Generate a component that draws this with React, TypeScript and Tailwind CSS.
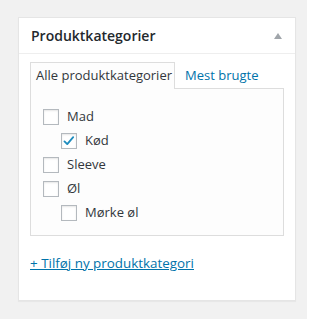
import React from "react";

function Box({ checked }: { checked?: boolean }) {
  return (
    <span className="w-4 h-4 border border-[#b4b9be] bg-white flex items-center justify-center shrink-0 shadow-[inset_0_1px_2px_rgba(0,0,0,0.1)]">
      {checked && (
        <svg width="14" height="14" viewBox="0 0 20 20">
          <path d="M3.5 10.5 L7.5 14.5 L16 4.5" fill="none" stroke="#1e8cbe" strokeWidth="2.6" strokeLinecap="round" strokeLinejoin="round" />
        </svg>
      )}
    </span>
  );
}

function Row({ label, indent, checked }: { label: string; indent?: boolean; checked?: boolean }) {
  return (
    <div className={indent ? "flex items-center h-6 pl-[18px]" : "flex items-center h-6"}>
      <Box checked={checked} />
      <span className="ml-2 text-[13px] text-[#32373c]">{label}</span>
    </div>
  );
}

export default function App() {
  return (
    <div className="w-[307px] h-[319px] bg-[#f1f1f1] pt-[17px] pl-[18px]" style={{ fontFamily: '"Open Sans", "Liberation Sans", sans-serif' }}>
      <div className="w-[278px] h-[284px] bg-white border border-[#e5e5e5] shadow-[0_1px_1px_rgba(0,0,0,0.04)]">
        <div className="h-9 border-b border-[#eeeeee] flex items-center justify-between pl-3 pr-[13px]">
          <span className="text-[14px] font-semibold text-[#23282d]">Produktkategorier</span>
          <svg width="8" height="6" viewBox="0 0 8 6">
            <path d="M4 0 L8 6 L0 6 Z" fill="#a0a5aa" />
          </svg>
        </div>
        <div className="px-[11px] pt-2">
          <div className="flex items-end h-[27px]">
            <div className="h-[27px] w-[145px] border border-[#dddddd] border-b-0 bg-[#fdfdfd] pl-[5px] flex items-center relative z-10 text-[13px] text-[#32373c]">
              Alle produktkategorier
            </div>
            <div className="h-[27px] pl-[10px] flex items-center text-[13px] text-[#0073aa]">Mest brugte</div>
          </div>
          <div className="-mt-px border border-[#dddddd] bg-[#fdfdfd] h-[148px] pt-4 pl-3">
            <Row label="Mad" />
            <Row label="Kød" indent checked />
            <Row label="Sleeve" />
            <Row label="Øl" />
            <Row label="Mørke øl" indent />
          </div>
          <div className="mt-[17px] text-[13.4px] text-[#0073aa] underline">+ Tilføj ny produktkategori</div>
        </div>
      </div>
    </div>
  );
}
